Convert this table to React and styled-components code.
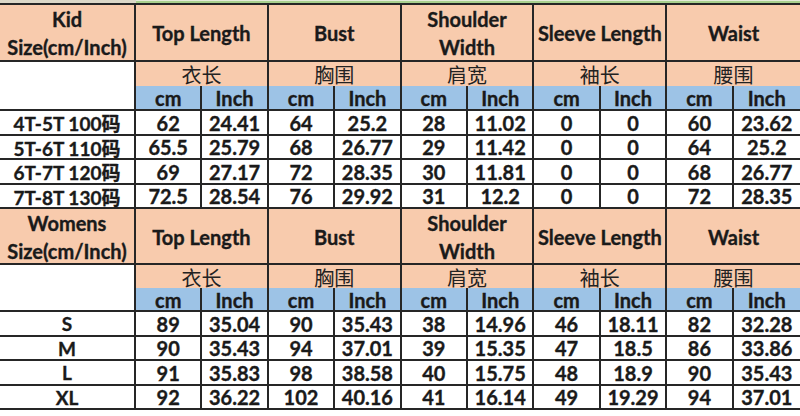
import React from "react";
import styled, { createGlobalStyle } from "styled-components";

const Global = createGlobalStyle`
  html, body { margin: 0; padding: 0; background: #ffffff; }
  body { width: 800px; height: 416px; overflow: hidden; font-family: Lato, "Noto Sans CJK SC", sans-serif; }
  * { box-sizing: border-box; }
`;

const LINE = "2px solid #262626";

const Page = styled.div`
  width: 800px;
  display: flex;
  flex-direction: column;
`;

const TopStrip = styled.div`
  height: 3px;
  display: flex;
`;

const StripLeft = styled.div`
  width: 136px;
  background: #dcd8c8;
`;

const StripRight = styled.div`
  flex: 1;
  background: linear-gradient(#e3ead8 0 1px, #a9d08e 1px);
`;

const Section = styled.div`
  display: grid;
  grid-template-columns: 136px repeat(10, 1fr);
  grid-template-rows: ${(p) => p.$rows};
  border-top: ${(p) => (p.$first ? LINE : "none")};
`;

const Cell = styled.div`
  display: flex;
  align-items: center;
  justify-content: center;
  text-align: center;
  font-weight: 700;
  font-size: 20px;
  color: #1a1a1a;
  -webkit-text-stroke: 0.35px #1a1a1a;
  border-right: ${(p) => (p.$last ? "none" : LINE)};
  border-bottom: ${LINE};
  white-space: nowrap;
  overflow: hidden;
`;

const HeadCell = styled(Cell)`
  background: #f8cbad;
  grid-column: span ${(p) => p.$span || 1};
  line-height: 28px;
  flex-direction: column;
  padding-top: 1px;
`;

const BlankCell = styled(Cell)`
  background: #ffffff;
  grid-row: span 2;
`;

const CnCell = styled(Cell)`
  background: #f8cbad;
  grid-column: span 2;
  border-bottom: none;
  align-items: center;
  overflow: visible;
  font-family: "Noto Sans CJK SC", sans-serif;
  font-weight: 400;
  font-size: 20px;
  line-height: 20px;
  padding-top: 2px;
  -webkit-text-stroke: 0;
  color: #222;
`;

const UnitCell = styled(Cell)`
  background: #9dc3e6;
  padding-top: 1px;
`;

const DataCell = styled(Cell)`
  background: #ffffff;
  padding-top: 1px;
`;

const SizeCell = styled(DataCell)`
  font-family: Lato, "Noto Sans CJK SC", sans-serif;
  font-size: 19px;
`;

const groups = [
  { en: ["Top Length"], cn: "衣长" },
  { en: ["Bust"], cn: "胸围" },
  { en: ["Shoulder", "Width"], cn: "肩宽" },
  { en: ["Sleeve Length"], cn: "袖长" },
  { en: ["Waist"], cn: "腰围" },
];

const kid = [
  ["4T-5T 100码", "62", "24.41", "64", "25.2", "28", "11.02", "0", "0", "60", "23.62"],
  ["5T-6T 110码", "65.5", "25.79", "68", "26.77", "29", "11.42", "0", "0", "64", "25.2"],
  ["6T-7T 120码", "69", "27.17", "72", "28.35", "30", "11.81", "0", "0", "68", "26.77"],
  ["7T-8T 130码", "72.5", "28.54", "76", "29.92", "31", "12.2", "0", "0", "72", "28.35"],
];

const women = [
  ["S", "89", "35.04", "90", "35.43", "38", "14.96", "46", "18.11", "82", "32.28"],
  ["M", "90", "35.43", "94", "37.01", "39", "15.35", "47", "18.5", "86", "33.86"],
  ["L", "91", "35.83", "98", "38.58", "40", "15.75", "48", "18.9", "90", "35.43"],
  ["XL", "92", "36.22", "102", "40.16", "41", "16.14", "49", "19.29", "94", "37.01"],
];

function SizeTable({ title, rows, rowTemplate, first }) {
  return (
    <Section $rows={rowTemplate} $first={first}>
      <HeadCell>
        <span>{title}</span>
        <span>Size(cm/Inch)</span>
      </HeadCell>
      {groups.map((g, i) => (
        <HeadCell key={g.cn} $span={2} $last={i === groups.length - 1}>
          {g.en.map((t) => (
            <span key={t}>{t}</span>
          ))}
        </HeadCell>
      ))}
      <BlankCell />
      {groups.map((g, i) => (
        <CnCell key={g.cn} $last={i === groups.length - 1}>
          {g.cn}
        </CnCell>
      ))}
      {groups.map((g, i) => (
        <React.Fragment key={g.cn}>
          <UnitCell>cm</UnitCell>
          <UnitCell $last={i === groups.length - 1}>Inch</UnitCell>
        </React.Fragment>
      ))}
      {rows.map((r) => (
        <React.Fragment key={r[0]}>
          <SizeCell>{r[0]}</SizeCell>
          {r.slice(1).map((v, j) => (
            <DataCell key={j} $last={j === 9}>
              {v}
            </DataCell>
          ))}
        </React.Fragment>
      ))}
    </Section>
  );
}

export default function App() {
  return (
    <>
      <Global />
      <Page>
        <TopStrip>
          <StripLeft />
          <StripRight />
        </TopStrip>
        <SizeTable
          first
          title="Kid"
          rows={kid}
          rowTemplate="57px 24px 25px repeat(4, 24.5px)"
        />
        <SizeTable
          title="Womens"
          rows={women}
          rowTemplate="56px 23px 24px repeat(4, 24.5px)"
        />
      </Page>
    </>
  );
}
